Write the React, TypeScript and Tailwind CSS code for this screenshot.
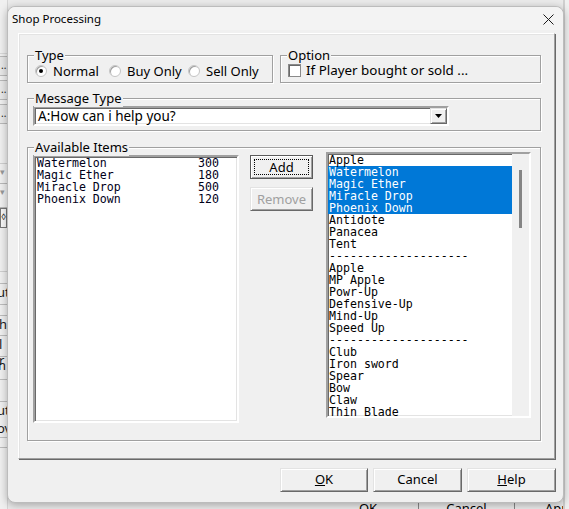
import React from 'react';

const rightItems = [
  'Apple', 'Watermelon', 'Magic Ether', 'Miracle Drop', 'Phoenix Down', 'Antidote', 'Panacea', 'Tent',
  '--------------------', 'Apple', 'MP Apple', 'Powr-Up', 'Defensive-Up', 'Mind-Up', 'Speed Up',
  '--------------------', 'Club', 'Iron sword', 'Spear', 'Bow', 'Claw', 'Thin Blade',
];
const selected = [1, 2, 3, 4];

const shopItems = [
  { name: 'Watermelon', price: 300 },
  { name: 'Magic Ether', price: 180 },
  { name: 'Miracle Drop', price: 500 },
  { name: 'Phoenix Down', price: 120 },
];

function GroupBox({ label, className = '', children }: { label: string; className?: string; children?: React.ReactNode }) {
  return (
    <div className={`relative border border-[#a0a0a0] shadow-[inset_1px_1px_0_#fff,1px_1px_0_#fff] ${className}`}>
      <span className="absolute left-[6px] -top-[10px] bg-[#f0f0f0] px-[1px] text-[13px] leading-[18px]">{label}</span>
      {children}
    </div>
  );
}

function Radio({ label, checked, className = '' }: { label: string; checked?: boolean; className?: string }) {
  return (
    <div className={`flex items-center ${className}`}>
      <span className="w-[12px] h-[12px] rounded-full border border-[#c4c4c4] bg-white flex items-center justify-center shadow-[inset_1px_1px_0_#a0a0a0]">
        {checked && <span className="w-[4px] h-[4px] rounded-full bg-black" />}
      </span>
      <span className="ml-[6px] text-[13px] leading-[14px]">{label}</span>
    </div>
  );
}

function Button({ children, className = '', isDefault, disabled }: { children: React.ReactNode; className?: string; isDefault?: boolean; disabled?: boolean }) {
  return (
    <div
      className={`relative flex items-center justify-center h-[24px] text-[13px] bg-[#f0f0f0] border ${
        isDefault ? 'border-[#5a5a5a]' : 'border-t-[#e3e3e3] border-l-[#e3e3e3] border-b-[#696969] border-r-[#696969]'
      } shadow-[inset_1px_1px_0_#fff,inset_-1px_-1px_0_#a0a0a0] ${disabled ? 'text-[#a0a0a0]' : 'text-black'} ${className}`}
    >
      {isDefault && <span className="absolute left-[3px] right-[3px] top-[3px] bottom-[3px] border border-dotted border-black" />}
      <span className="relative">{children}</span>
    </div>
  );
}

const sunken =
  'border-2 border-t-[#a0a0a0] border-l-[#a0a0a0] border-b-[#fff] border-r-[#fff] shadow-[inset_1px_1px_0_#696969,inset_-1px_-1px_0_#e3e3e3]';

export default function App() {
  return (
    <div className="relative w-[569px] h-[509px] overflow-hidden bg-[#ebebeb] font-['Noto_Sans','Open_Sans',sans-serif] text-black">
      {/* window behind the dialog */}
      <div className="absolute left-0 top-0 w-[8px] h-[509px] flex flex-col bg-[#f0f0f0] border-r border-[#d6d6d6] text-[13px] leading-[16px] text-[#1a1a1a]">
        <div className="h-[54px] border-b border-[#d9d9d9]" />
        <div className="h-[20px] mt-[2px] border-y border-[#b9b9b9] bg-[#e8e8e8] text-[10px] pl-[1px]">..</div>
        <div className="h-[20px] mt-[4px] border-y border-[#b9b9b9] bg-[#e8e8e8] text-[10px] pl-[1px]">..</div>
        <div className="h-[20px] mt-[4px] border-y border-[#b9b9b9] bg-[#e8e8e8] text-[10px] pl-[1px]">..</div>
        <div className="h-[40px] border-b border-[#cfcfcf]" />
        <div className="h-[20px] border-b border-[#b9b9b9] text-[#999] text-[9px]">▾</div>
        <div className="h-[24px] border-b border-[#b9b9b9] text-[#999] text-[9px]">▾</div>
        <div className="h-[20px] border border-[#777] bg-[#f8f8f8] text-[9px]">◊</div>
        <div className="h-[44px] border-b border-[#cfcfcf]" />
        <div className="h-[12px] border-b border-[#bdbdbd]" />
        <div className="h-[20px] -ml-[3px]">ut</div>
        <div className="h-[12px] border-y border-[#bdbdbd]" />
        <div className="h-[20px] -ml-[1px] border-b border-[#bdbdbd]">h</div>
        <div className="h-[20px] -ml-[1px]">l r</div>
        <div className="h-[24px] -ml-[2px] border-y border-[#bdbdbd]">n</div>
        <div className="h-[22px] border-b border-[#bdbdbd]" />
        <div className="h-[18px] -ml-[3px]">ut</div>
        <div className="h-[18px] -ml-[3px] border-b border-[#bdbdbd]">ov</div>
        <div className="h-[10px] border-b border-[#bdbdbd]" />
      </div>
      <div className="absolute left-[300px] top-[496px] flex text-[13px] leading-[24px]">
        <div className="w-[119px] h-[24px] border-r border-[#888] text-center pl-[18px]">OK</div>
        <div className="w-[96px] h-[24px] border-r border-[#888] text-center">Cancel</div>
        <div className="w-[60px] h-[24px] pl-[30px]">Apply</div>
      </div>
      <div className="absolute right-0 top-0 w-[6px] h-[509px] border-l-2 border-[#d0d0d0] bg-[#f0f0f0]" />

      {/* dialog */}
      <div className="absolute left-[7px] top-[6px] w-[557px] h-[497px] rounded-[8px] bg-[#f0f0f0] border border-[#bcbcbc] shadow-[0_2px_8px_rgba(0,0,0,0.3)] flex flex-col">
        <div className="h-[23px] flex items-center justify-between pl-[4px] pr-[9px] bg-[#f3f3f3] rounded-t-[8px]">
          <span className="text-[11.5px]">Shop Processing</span>
          <svg width="11" height="11" viewBox="0 0 11 11" className="mt-[1px]">
            <path d="M0.5 0.5 L10.5 10.5 M10.5 0.5 L0.5 10.5" stroke="#1a1a1a" strokeWidth="1" />
          </svg>
        </div>

        <div className="ml-[10px] mt-[3px] w-[537px] h-[426px] border border-t-[#fff] border-l-[#fff] border-b-[#a0a0a0] border-r-[#a0a0a0] shadow-[1px_1px_0_#696969,inset_1px_1px_0_#e3e3e3] flex flex-col">
          <div className="flex mt-[21px] ml-[8px]">
            <GroupBox label="Type" className="w-[246px] h-[28px]">
              <div className="flex pt-[8px] pl-[7px]">
                <Radio label="Normal" checked className="w-[74px]" />
                <Radio label="Buy Only" className="w-[79px]" />
                <Radio label="Sell Only" />
              </div>
            </GroupBox>
            <GroupBox label="Option" className="ml-[7px] w-[261px] h-[28px]">
              <div className="flex items-center pt-[7px] pl-[7px]">
                <span className="w-[13px] h-[13px] bg-white border border-[#8a8a8a] shadow-[inset_1px_1px_0_#696969]" />
                <span className="ml-[5px] text-[13.4px] leading-[14px]">If Player bought or sold ...</span>
              </div>
            </GroupBox>
          </div>

          <GroupBox label="Message Type" className="mt-[15px] ml-[8px] w-[514px] h-[33px]">
            <div className={`ml-[5px] mt-[7px] w-[416px] h-[20px] bg-white flex ${sunken}`}>
              <span className="flex-1 text-[13.5px] leading-[16px] pl-[3px]">A:How can i help you?</span>
              <div className="w-[17px] h-[16px] bg-[#f0f0f0] border border-t-[#e3e3e3] border-l-[#e3e3e3] border-b-[#696969] border-r-[#696969] shadow-[inset_1px_1px_0_#fff,inset_-1px_-1px_0_#a0a0a0] flex items-center justify-center">
                <svg width="7" height="4" viewBox="0 0 7 4">
                  <path d="M0 0 H7 L3.5 4 Z" fill="#000" />
                </svg>
              </div>
            </div>
          </GroupBox>

          <GroupBox label="Available Items" className="mt-[16px] ml-[8px] w-[514px] h-[294px]">
            <div className="flex font-['DejaVu_Sans_Mono',monospace] text-[11.6px] leading-[12px]">
              <div className={`ml-[5px] mt-[7px] w-[206px] h-[268px] bg-white ${sunken}`}>
                {shopItems.map((it) => (
                  <div key={it.name} className="flex h-[12px] pl-[2px] text-[#000018]">
                    <span className="w-[161px] whitespace-pre">{it.name}</span>
                    <span>{it.price}</span>
                  </div>
                ))}
              </div>

              <div className="ml-[11px] flex flex-col font-['Noto_Sans','Open_Sans',sans-serif]">
                <Button isDefault className="mt-[7px] w-[63px]">Add</Button>
                <Button disabled className="mt-[8px] w-[63px]">Remove</Button>
              </div>

              <div className={`ml-[13px] mt-[4px] w-[205px] h-[266px] bg-white flex ${sunken}`}>
                <div className="flex-1 overflow-hidden">
                  {rightItems.map((name, i) => (
                    <div
                      key={i}
                      className={`h-[12px] pl-[1px] whitespace-pre ${selected.includes(i) ? 'bg-[#0078d7] text-white' : 'text-black'}`}
                    >
                      {name}
                    </div>
                  ))}
                </div>
                <div className="w-[17px] bg-[#f0f0f0] flex justify-center pt-[16px]">
                  <div className="w-[3px] h-[58px] bg-[#858585]" />
                </div>
              </div>
            </div>
          </GroupBox>
        </div>

        <div className="flex justify-end gap-[5px] pr-[7px] mt-[9px]">
          <Button className="w-[88px]"><span className="underline">O</span>K</Button>
          <Button className="w-[89px]">Cancel</Button>
          <Button className="w-[89px]"><span className="underline">H</span>elp</Button>
        </div>
      </div>
    </div>
  );
}
